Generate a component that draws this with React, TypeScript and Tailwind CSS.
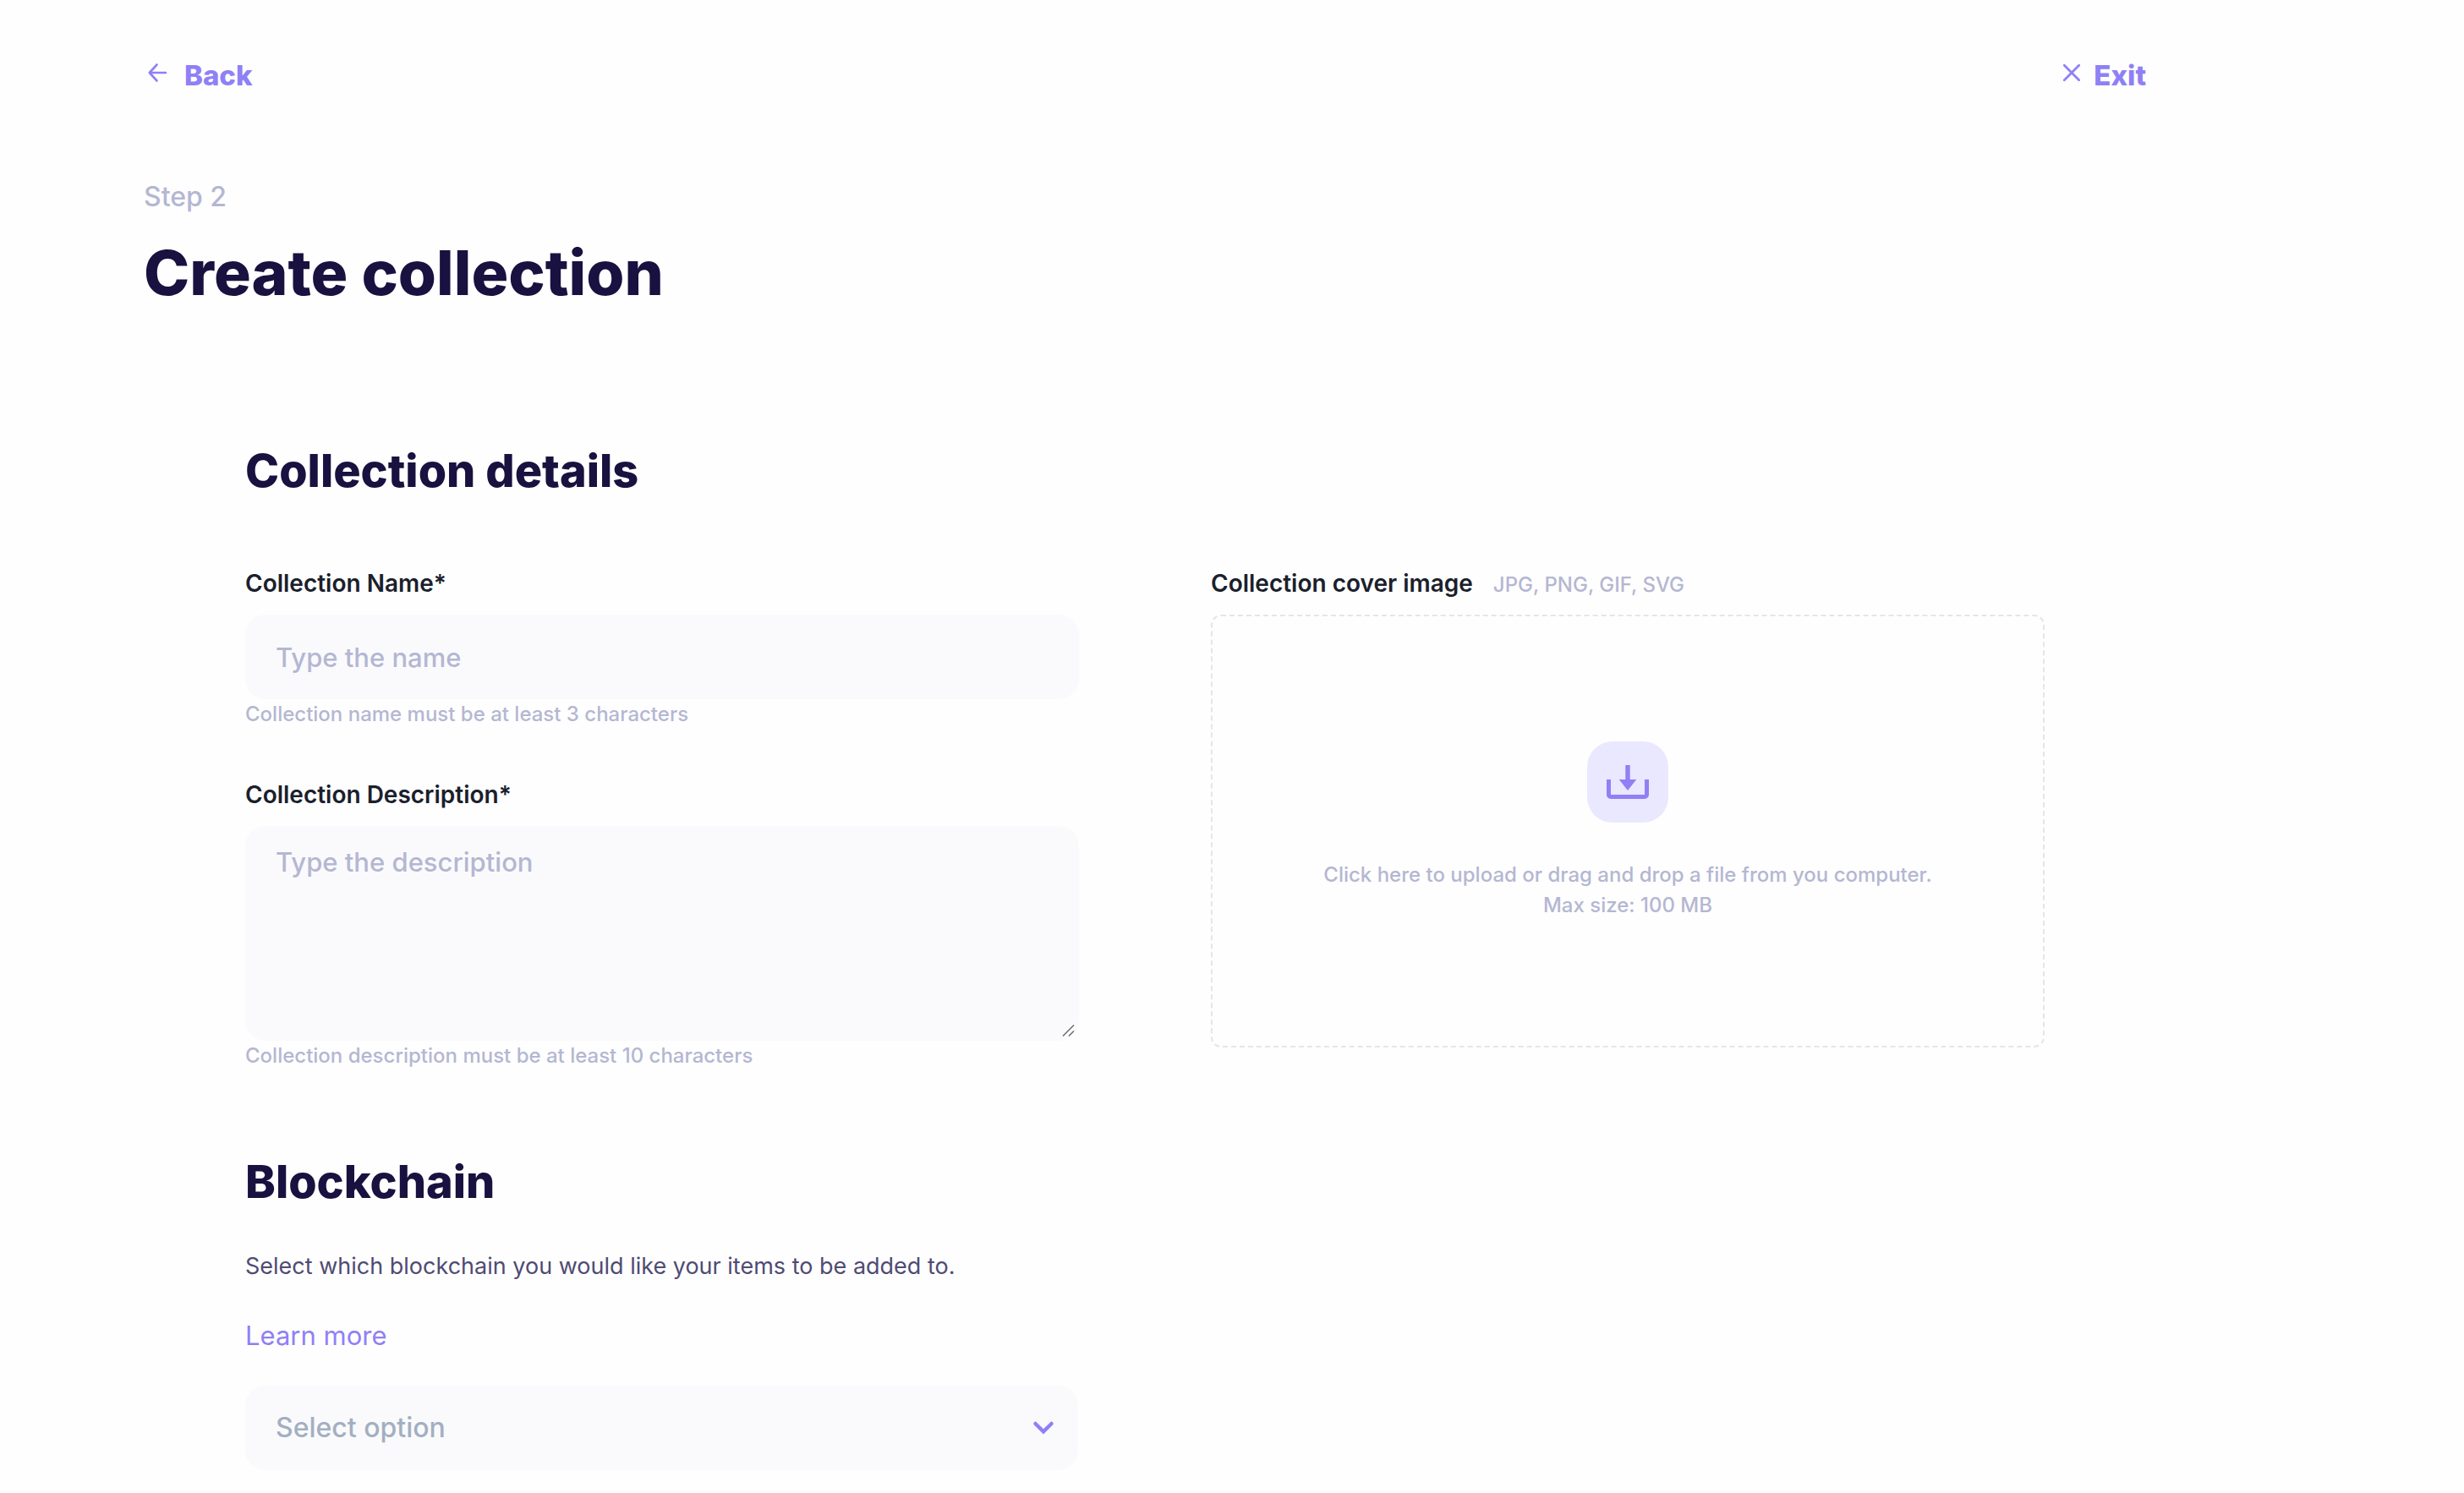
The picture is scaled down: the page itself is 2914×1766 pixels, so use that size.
import React from "react";

const ACCENT = "#8f80f6";

function ArrowLeftIcon() {
  return (
    <svg aria-hidden="true" viewBox="0 0 32 32" className="size-8" fill="none" stroke={ACCENT} strokeWidth="2.600" strokeLinecap="round" strokeLinejoin="round">
      <path d="M26 17H7M15.500 7.500L6.800 17l8.700 9.500" />
    </svg>
  );
}

function CloseIcon() {
  return (
    <svg aria-hidden="true" viewBox="0 0 32 32" className="size-8" fill="none" stroke={ACCENT} strokeWidth="2.800" strokeLinecap="round">
      <path d="M7.300 8.300l17.400 17.400M24.700 8.300L7.300 25.700" />
    </svg>
  );
}

function UploadIcon() {
  return (
    <svg aria-hidden="true" viewBox="0 0 96 96" className="size-24">
      <path d="M25.500 45v18a2.500 2.500 0 0 0 2.500 2.500h40a2.500 2.500 0 0 0 2.500-2.500V45" fill="none" stroke={ACCENT} strokeWidth="5" />
      <path d="M45.300 28h5.400v17h7.600L48 58 37.700 45h7.600z" fill={ACCENT} />
    </svg>
  );
}

const fieldClass =
  "block w-full rounded-3xl bg-[#fafafc] px-9 text-[31px] font-medium text-[#19113f] outline-none placeholder:text-[#b4b7d2] placeholder:opacity-100";
const labelClass = "text-[28px] leading-9 font-semibold text-[#1a202c]";
const hintClass = "text-[24px] leading-9 font-medium text-[#b4b7d2]";
const sectionTitleClass = "text-[54px] leading-[68px] font-extrabold text-[#19113f]";
const navClass = "flex text-[33px] leading-10 font-extrabold text-[#8f80f6]";

export default function App() {
  return (
    <main className="min-h-screen bg-[#fefefe] pt-[69px] pr-[376px] pb-[26px] pl-[170px] font-['Inter',sans-serif]">
      <nav className="flex justify-between">
        <button type="button" className={`${navClass} gap-4`}>
          <ArrowLeftIcon />
          Back
        </button>
        <button type="button" className={`${navClass} gap-[10px]`}>
          <CloseIcon />
          Exit
        </button>
      </nav>

      <header className="mt-[104px]">
        <p className="text-[32px] leading-10 font-medium text-[#b4b7d2]">Step 2</p>
        <h1 className="mt-[26px] text-[73px] leading-[88px] font-extrabold text-[#19113f]">Create collection</h1>
      </header>

      <form className="mt-[156px] px-[120px]">
        <h2 className={sectionTitleClass}>Collection details</h2>

        <div className="mt-[81px] grid grid-cols-2 gap-x-[156px]">
          <div className="flex flex-col">
            <label htmlFor="name" className={labelClass}>Collection Name*</label>
            <input id="name" type="text" placeholder="Type the name" aria-describedby="name-hint" className={`${fieldClass} mt-[19px] h-[100px]`} />
            <p id="name-hint" className={hintClass}>Collection name must be at least 3 characters</p>

            <label htmlFor="description" className={`${labelClass} mt-[59px]`}>Collection Description*</label>
            <div className="relative mt-[19px]">
              <textarea id="description" placeholder="Type the description" aria-describedby="description-hint" className={`${fieldClass} h-[254px] resize-none py-6 leading-[38px]`} />
              <svg aria-hidden="true" viewBox="0 0 16 16" className="absolute right-1 bottom-1 size-4" stroke="#6b6b6b" strokeWidth="1.500">
                <path d="M1 14.500L14 1.500M8 14.500l6-6" />
              </svg>
            </div>
            <p id="description-hint" className={hintClass}>Collection description must be at least 10 characters</p>
          </div>

          <div className="flex flex-col">
            <div className="flex h-9 items-baseline gap-6">
              <label htmlFor="cover" className={labelClass}>Collection cover image</label>
              <span className={hintClass}>JPG, PNG, GIF, SVG</span>
            </div>
            <label htmlFor="cover" className="mt-[19px] flex h-[512px] cursor-pointer flex-col items-center justify-center rounded-xl border-2 border-dashed border-[#e2e6ee]">
              <span className="rounded-[30px] bg-[#eae8fe]">
                <UploadIcon />
              </span>
              <span className={`${hintClass} mt-11 text-center`}>
                Click here to upload or drag and drop a file from you computer.
                <br />
                Max size: 100 MB
              </span>
            </label>
            <input id="cover" type="file" accept=".jpg,.png,.gif,.svg" className="sr-only" />
          </div>
        </div>

        <h2 className={`${sectionTitleClass} mt-[97px]`}>Blockchain</h2>
        <p className="mt-12 text-[27px] leading-9 text-[#4f4b73]">Select which blockchain you would like your items to be added to.</p>
        <a href="#learn-more" className="mt-11 block w-fit text-[31px] leading-10 text-[#8f80f6]">Learn more</a>

        <div className="mt-[39px] grid grid-cols-2 gap-x-[158px]">
          <div className="relative">
            <select aria-label="Blockchain" defaultValue="" className="block h-[100px] w-full appearance-none rounded-3xl bg-[#fafafc] px-9 text-[32px] font-medium text-[#a3afc1] outline-none">
              <option value="">Select option</option>
            </select>
            <svg aria-hidden="true" viewBox="0 0 32 32" className="pointer-events-none absolute top-[34px] right-[25px] size-8" fill="none" stroke={ACCENT} strokeWidth="4.500" strokeLinecap="round">
              <path d="M6.500 11l9.500 9.300 9.500-9.300" />
            </svg>
          </div>
        </div>
      </form>
    </main>
  );
}
